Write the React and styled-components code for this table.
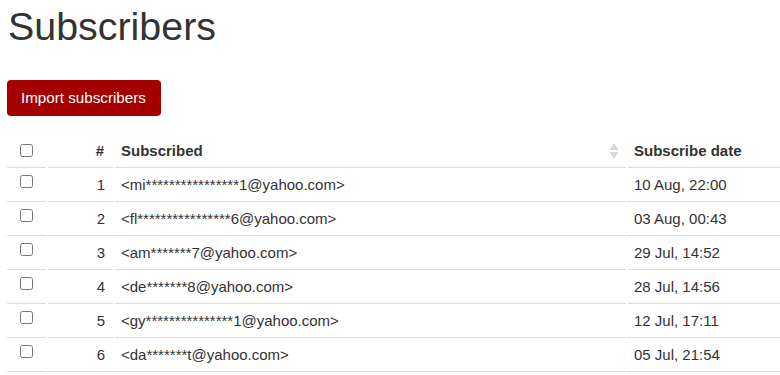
import React from 'react';
import styled, { createGlobalStyle } from 'styled-components';

const GlobalStyle = createGlobalStyle`
  html, body {
    margin: 0;
    padding: 0;
    background: #fff;
    overflow: hidden;
  }
  body {
    font-family: "Liberation Sans", Arial, Helvetica, sans-serif;
    color: #333;
  }
`;

const Page = styled.div`
  padding: 5px 0 0 5px;
  overflow: hidden;
`;

const Title = styled.h1`
  margin: 0 0 32px 3px;
  font-size: 39.4px;
  font-weight: 400;
  line-height: 43px;
  color: #333;
`;

const ImportButton = styled.button`
  display: inline-block;
  margin-left: 2px;
  height: 36px;
  padding: 0 15px 0 14px;
  border: none;
  border-radius: 4px;
  background: #a50000;
  color: #fff;
  font-family: inherit;
  font-size: 15.2px;
  line-height: 36px;
  cursor: pointer;
`;

const Table = styled.table`
  width: calc(100% + 2px);
  margin-top: 18px;
  border-collapse: separate;
  border-spacing: 2px 0;
  font-size: 15px;
  color: #333;
`;

const HeadCell = styled.th`
  position: relative;
  height: 33px;
  padding: 0 6px;
  border-bottom: 1px solid #ddd;
  font-weight: 700;
  line-height: 19px;
  vertical-align: middle;
  text-align: ${(p) => p.$align || 'left'};
  width: ${(p) => p.$width || 'auto'};
  padding-right: ${(p) => (p.$align === 'right' ? '9px' : '6px')};
`;

const Cell = styled.td`
  padding: 7px 6px;
  border-bottom: 1px solid #ddd;
  line-height: 19px;
  vertical-align: top;
  text-align: ${(p) => p.$align || 'left'};
  padding-right: ${(p) => (p.$align === 'right' ? '8px' : '6px')};
`;

const Check = styled.input.attrs({ type: 'checkbox' })`
  width: 13px;
  height: 13px;
  margin: 0;
  vertical-align: middle;
`;

const CheckWrap = styled.div`
  display: flex;
  justify-content: center;
  height: ${(p) => (p.$head ? 'auto' : '19px')};
  align-items: ${(p) => (p.$head ? 'center' : 'flex-start')};
`;

const SortIcon = styled.svg`
  position: absolute;
  right: 7px;
  top: 50%;
  margin-top: -9px;
`;

const rows = [
  ['1', '<mi****************1@yahoo.com>', '10 Aug, 22:00'],
  ['2', '<fl****************6@yahoo.com>', '03 Aug, 00:43'],
  ['3', '<am*******7@yahoo.com>', '29 Jul, 14:52'],
  ['4', '<de*******8@yahoo.com>', '28 Jul, 14:56'],
  ['5', '<gy***************1@yahoo.com>', '12 Jul, 17:11'],
  ['6', '<da*******t@yahoo.com>', '05 Jul, 21:54'],
];

export default function App() {
  return (
    <Page>
      <GlobalStyle />
      <Title>Subscribers</Title>
      <ImportButton>Import subscribers</ImportButton>
      <Table>
        <thead>
          <tr>
            <HeadCell $width="27px" $align="center">
              <CheckWrap $head>
                <Check />
              </CheckWrap>
            </HeadCell>
            <HeadCell $width="50px" $align="right">#</HeadCell>
            <HeadCell>
              Subscribed
              <SortIcon width="10" height="18" viewBox="0 0 10 18">
                <path d="M5 1 L9.5 8 L0.5 8 Z" fill="#d9d9d9" />
                <path d="M5 17 L9.5 10 L0.5 10 Z" fill="#d9d9d9" />
              </SortIcon>
            </HeadCell>
            <HeadCell $width="140px">Subscribe date</HeadCell>
          </tr>
        </thead>
        <tbody>
          {rows.map(([n, email, date]) => (
            <tr key={n}>
              <Cell $align="center">
                <CheckWrap>
                  <Check />
                </CheckWrap>
              </Cell>
              <Cell $align="right">{n}</Cell>
              <Cell>{email}</Cell>
              <Cell>{date}</Cell>
            </tr>
          ))}
        </tbody>
      </Table>
    </Page>
  );
}
